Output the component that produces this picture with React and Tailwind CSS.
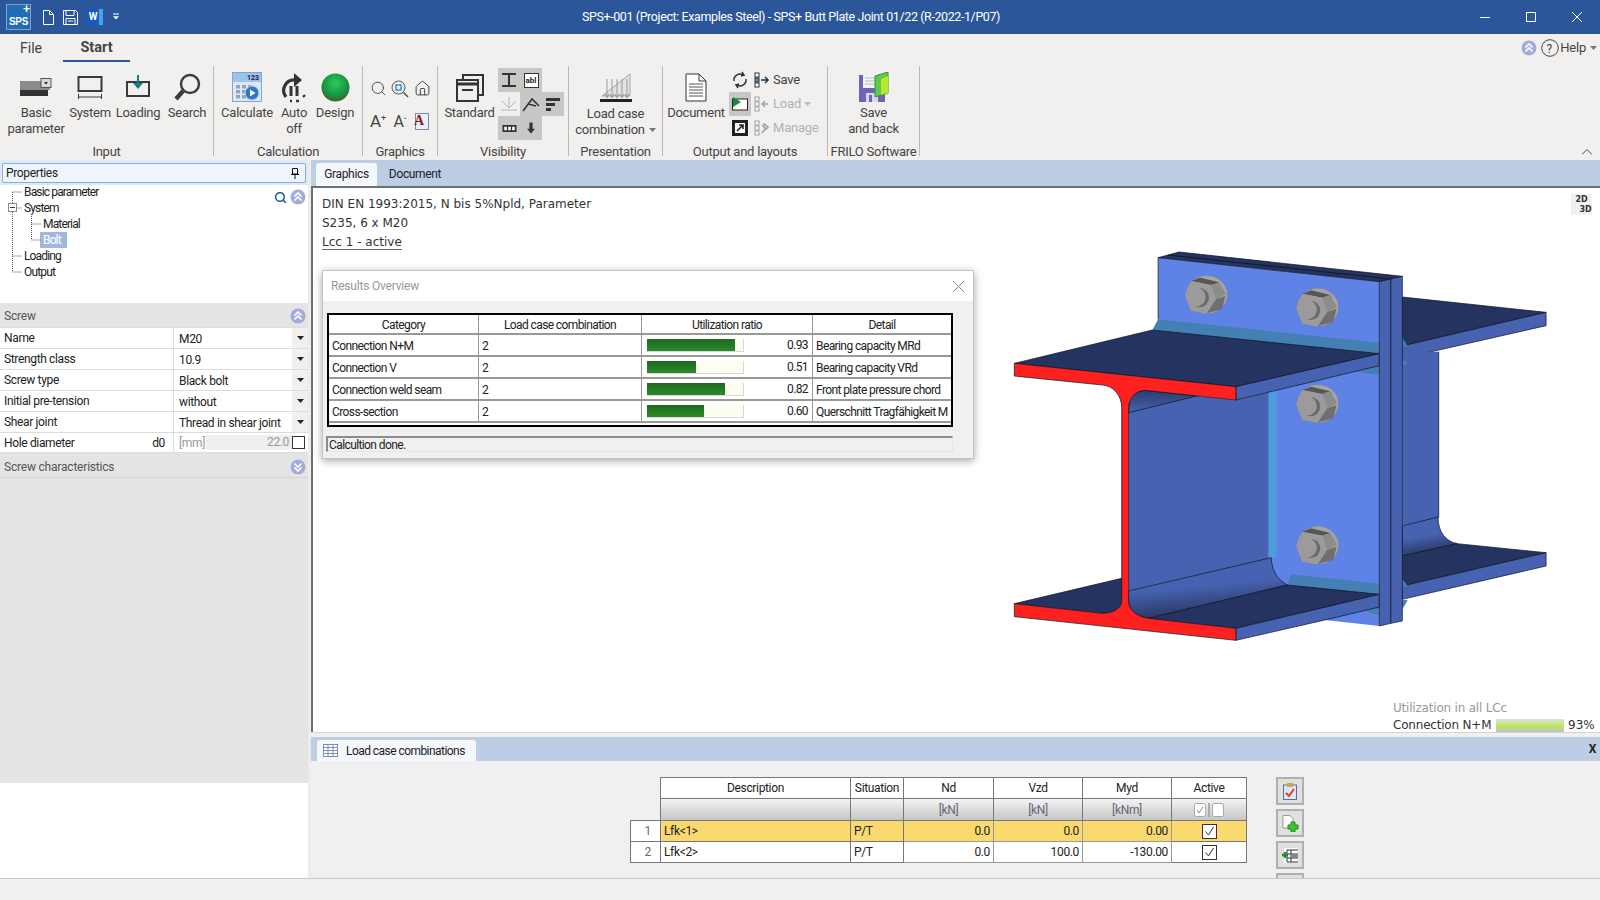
import { Search, House } from "lucide-react";

/* ── small shared bits ─────────────────────────────────── */
const Sep = () => <div className="w-px h-[90px] mt-[4px] bg-[#b9b9b9] shrink-0" />;

const Group = ({ w, label, children }) => (
  <div className={`${w} shrink-0 flex flex-col justify-between pt-[6px]`}>
    <div className="flex h-[76px]">{children}</div>
    <div className="h-[16px] leading-[16px] text-center text-[13px] tracking-[-0.25px] text-[#444] whitespace-nowrap">{label}</div>
  </div>
);

const Btn = ({ w, icon, lines }) => (
  <div className={`${w} shrink-0 flex flex-col items-center`}>
    <div className="h-[35px] mt-[2px] flex items-center justify-center">{icon}</div>
    {lines.map((l) => (
      <div key={l} className="leading-[16px] text-[13px] tracking-[-0.25px] text-[#444] whitespace-nowrap">{l}</div>
    ))}
  </div>
);

const Chevrons = ({ down }) => (
  <svg width="16" height="16" viewBox="0 0 16 16" className="shrink-0">
    <circle cx="8" cy="8" r="7.5" fill="#a3abdc" />
    <g fill="none" stroke="#fff" strokeWidth="1.6" transform={down ? "rotate(180 8 8)" : undefined}>
      <path d="M4.5 7.5 8 4l3.5 3.5M4.5 11.5 8 8l3.5 3.5" />
    </g>
  </svg>
);

const Caret = ({ color = "#222" }) => (
  <svg width="7" height="4" viewBox="0 0 7 4"><path d="M0 0h7L3.5 4z" fill={color} /></svg>
);

/* ── ribbon icons ──────────────────────────────────────── */
const IconBasic = () => (
  <svg width="32" height="20" viewBox="0 0 32 20">
    <rect x="0" y="3" width="30" height="9" fill="#8a8a8a" />
    <rect x="0" y="12" width="28" height="6" fill="#333" />
    <rect x="21" y="0.5" width="10" height="9" fill="#d8d8d8" stroke="#555" />
    <path d="M24 4h4l-2 2.5z" fill="#222" />
  </svg>
);
const IconSystem = () => (
  <svg width="26" height="24" viewBox="0 0 26 24" fill="none" stroke="#3a3a3a">
    <rect x="1.5" y="1" width="23" height="14" strokeWidth="2" />
    <path d="M1 21h24M1.5 18v5M24.5 18v5" />
  </svg>
);
const IconLoading = () => (
  <svg width="26" height="26" viewBox="0 0 26 26">
    <rect x="2" y="7" width="22" height="14" fill="none" stroke="#3a3a3a" strokeWidth="2" />
    <path d="M12 0h2v8h4l-5 6-5-6h4z" fill="#0f7f7f" />
  </svg>
);
const IconSearchBig = () => (
  <svg width="28" height="30" viewBox="0 0 28 30" fill="none" stroke="#3c3c3c">
    <circle cx="17" cy="11" r="9" strokeWidth="2.4" />
    <path d="M10 18 3 26" strokeWidth="4.4" />
  </svg>
);
const IconCalc = () => (
  <svg width="30" height="31" viewBox="0 0 30 31">
    <rect x="0.5" y="0.5" width="29" height="29" fill="#dbe8f6" stroke="#7ba7d9" />
    <rect x="1" y="1" width="28" height="9" fill="#9cc3ec" />
    <text x="15" y="8" fontSize="7" fontWeight="bold" fill="#224">123</text>
    {[4, 10, 16].map((x) =>
      [13, 18, 23].map((y) => <rect key={x + "-" + y} x={x} y={y} width="4" height="3.4" fill="#98a4b3" />)
    )}
    <circle cx="20" cy="21" r="7" fill="#2f78c4" stroke="#bcd7f2" />
    <path d="M18 17.5v7l5.5-3.5z" fill="#fff" />
  </svg>
);
const IconAuto = () => (
  <svg width="26" height="30" viewBox="0 0 26 30" fill="none">
    <path d="M14 7A10.5 10.5 0 0 0 5 24" stroke="#333" strokeWidth="3.2" />
    <path d="M13 0l8 7-8 7z" fill="#333" />
    <path d="M10 13v10M16 13v10" stroke="#333" strokeWidth="3" />
    <path d="M9 28h2M15 28h3M22 24l2-2" stroke="#333" strokeWidth="2.4" />
  </svg>
);
const IconSphere = () => (
  <svg width="29" height="29" viewBox="0 0 29 29">
    <defs>
      <radialGradient id="sph" cx="50%" cy="35%" r="65%">
        <stop offset="0" stopColor="#2fc85c" />
        <stop offset="0.65" stopColor="#119a41" />
        <stop offset="1" stopColor="#4d5a33" />
      </radialGradient>
    </defs>
    <circle cx="14.5" cy="14.5" r="14" fill="url(#sph)" />
  </svg>
);
const IconZoomFit = () => (
  <svg width="18" height="18" viewBox="0 0 18 18" fill="none" stroke="#555">
    <circle cx="7.5" cy="7.5" r="6.5" />
    <rect x="5" y="5" width="5" height="5" stroke="#2f8fd0" strokeWidth="1.4" />
    <path d="M12.5 12.5 17 17" strokeWidth="1.6" />
  </svg>
);
const IconDocA = () => (
  <div className="relative w-[14px] h-[17px] border border-[#7a8aa0] bg-[#eaf1fa]">
    <span className="absolute left-[-2px] top-[-1px] text-[14px] leading-[16px] font-bold text-[#8c1c1c] [font-family:'Liberation_Serif',serif]">A</span>
  </div>
);
const IconStandard = () => (
  <svg width="28" height="28" viewBox="0 0 28 28" fill="none" stroke="#333" strokeWidth="2">
    <path d="M7 6V1h20v20h-5" />
    <rect x="1" y="6" width="21" height="21" />
    <path d="M1 10h21" strokeWidth="3" />
    <path d="M6 16h11" />
  </svg>
);
const IconLoadCase = () => (
  <svg width="32" height="31" viewBox="0 0 32 31">
    <path d="M2 23 30 1v22z" fill="#e2e2e2" stroke="#a5a5a5" />
    {[7, 12, 17, 22, 27].map((x) => (
      <path key={x} d="M0 0v18M-2 15l2 4 2-4" transform={`translate(${x} 6)`} fill="none" stroke="#9a9a9a" />
    ))}
    <rect x="0" y="26" width="32" height="3" fill="#222" />
  </svg>
);
const IconDoc = () => (
  <svg width="22" height="29" viewBox="0 0 22 29" fill="none" stroke="#333">
    <path d="M1 1h13l7 7v20H1z" fill="#fff" />
    <path d="M14 1v7h7" />
    <path d="M4 11h14M4 14h14M4 17h14M4 20h14M4 23h14" stroke="#555" />
  </svg>
);
const IconFloppy = () => (
  <svg width="30" height="31" viewBox="0 0 30 31">
    <path d="M0 3h26v27H0z" fill="#6f63b8" />
    <rect x="4" y="3" width="17" height="13" fill="#f3f3f3" />
    <path d="M6 6h13M6 9h13M6 12h13" stroke="#b8b8b8" />
    <rect x="7" y="21" width="12" height="9" fill="#d8d8e8" />
    <rect x="10" y="23" width="3" height="7" fill="#6f63b8" />
    <path d="M16 4 29 0v21l-13 4z" fill="#5fc948" stroke="#2f9a30" />
    <path d="M22 7l7-3v17l-7 2z" fill="#b7e82c" />
  </svg>
);
const RowIco = ({ children, dim }) => (
  <svg width="16" height="16" viewBox="0 0 16 16" className={dim ? "opacity-40" : ""}>
    <rect x="1" y="1" width="4" height="4" fill="#fff" stroke="#333" />
    <rect x="1" y="6" width="4" height="4" fill={dim ? "#fff" : "#2f9fd6"} stroke="#333" />
    <rect x="1" y="11" width="4" height="4" fill="#fff" stroke="#333" />
    {children}
  </svg>
);

/* ── steel joint drawing, points are in a 1565x1290 sheet squeezed into 600x430 ── */
const Pg = ({ p, f, s = "#10131f" }) => (
  <polygon points={p} fill={f} stroke={s} strokeWidth="0.7" vectorEffect="non-scaling-stroke" />
);
const Pa = ({ d, f, s = "#10131f" }) => (
  <path d={d} fill={f} stroke={s} strokeWidth="0.7" vectorEffect="non-scaling-stroke" />
);
const Bolt = ({ x, y }) => (
  <g transform={`translate(${x} ${y}) scale(.87 1) translate(-110 -70)`}>
    <ellipse cx="112" cy="71" rx="62" ry="57" fill="#a5a5a5" stroke="#7d7d7d" />
    <polygon points="65,30 92,20 150,34 125,42" fill="#565656" />
    <polygon points="47,72 65,30 125,42 140,85 112,127 65,120" fill="#9c9a9a" />
    <polygon points="125,42 150,34 170,70 140,85" fill="#8c8c8c" />
    <polygon points="140,85 168,75 158,115 112,127" fill="#6f6f6f" />
    <circle cx="90" cy="80" r="29" fill="#6a6a6a" />
    <circle cx="80" cy="78" r="29" fill="#9c9a9a" />
  </g>
);
const Joint = () => (
  <svg width="600" height="430" viewBox="0 0 1565 1290" preserveAspectRatio="none" className="absolute left-[686px] top-[43px]">
    <defs>
      <linearGradient id="fil" x1="0" y1="0" x2="0.25" y2="1">
        <stop offset="0" stopColor="#4662b0" />
        <stop offset="0.55" stopColor="#4662b0" />
        <stop offset="1" stopColor="#28365f" />
      </linearGradient>
      <linearGradient id="fil2" x1="0" y1="1" x2="0" y2="0">
        <stop offset="0" stopColor="#4662b0" />
        <stop offset="1" stopColor="#2c3c6e" />
      </linearGradient>
    </defs>
    {/* back of the beam, right of the plate */}
    <Pg p="1052,198 1427,244 1052,345" f="#243360" />
    <Pg p="1427,244 1427,284 1052,382 1052,345" f="#4662b0" />
    <polygon points="1052,362 1147,362 1147,860 1052,885" fill="#4662b0" />
    <path d="M1147 362V860" stroke="#10131f" strokeWidth="0.7" vectorEffect="non-scaling-stroke" />
    <Pa d="M1052 885 1145 858C1146 905 1165 930 1195 938L1052 975Z" f="url(#fil)" />
    <Pg p="1052,975 1195,938 1427,965 1052,1065" f="#243360" />
    <Pg p="1427,965 1427,1005 1052,1105 1052,1065" f="#4662b0" />
    <polygon points="1052,320 1066,345 1052,348" fill="#4480b4" />
    <polygon points="1052,384 1066,396 1052,406" fill="#4480b4" />
    <polygon points="1052,1043 1066,1065 1052,1068" fill="#4480b4" />
    <polygon points="1052,1106 1066,1108 1052,1135" fill="#4480b4" />
    {/* end plate */}
    <polygon points="415,80 992,152 992,1185 850,1167 700,1100 700,480 415,300" fill="#5e82e6" />
    <path d="M415 80V265" stroke="#10131f" strokeWidth="0.7" vectorEffect="non-scaling-stroke" />
    <Pg p="415,80 470,63 1052,136 992,152" f="#243360" />
    <path d="M440 72 1022 144" stroke="#10131f" strokeWidth="0.8" vectorEffect="non-scaling-stroke" />
    <polygon points="415,265 992,335 992,370 400,297" fill="#4480b4" />
    <polygon points="930,422 992,404 992,432" fill="#4480b4" />
    <polygon points="762,1030 992,1058 992,1092 752,1062" fill="#4480b4" />
    <polygon points="940,1135 992,1128 992,1153" fill="#4480b4" />
    {[[540, 190], [830, 228], [830, 517], [830, 942]].map(([x, y]) => <Bolt key={y} x={x} y={y} />)}
    {/* web and fillets of the front beam */}
    <polygon points="338,520 380,478 618,507 703,483 703,985 338,1080" fill="#4662b0" />
    <Pa d="M338 545 515 495 380 478C355 480 338 500 338 545Z" f="url(#fil2)" />
    <polygon points="703,483 724,477 724,982 703,982" fill="#4d9cdc" />
    <Pa d="M338 1080 710 980C712 1020 725 1045 752 1062L390 1162C355 1155 338 1135 338 1110Z" f="url(#fil)" />
    {/* flanges */}
    <Pg p="40,397 400,297 992,368 618,467" f="#243360" />
    <Pg p="618,467 992,368 992,404 618,507" f="#4662b0" />
    <Pa d="M40 1118 320 1042V1110C320 1130 300 1147 270 1147Z" f="#243360" />
    <Pg p="390,1162 752,1062 992,1090 618,1192" f="#243360" />
    <Pg p="618,1192 992,1090 992,1128 850,1167 618,1228" f="#4662b0" />
    {/* cut section */}
    <Pa
      d="M40 397 618 467V507L380 478C355 480 338 500 338 530V1110C338 1135 355 1155 390 1162L618 1192V1228L40 1157V1118L270 1147C300 1147 320 1130 320 1110V530C320 495 300 465 270 462L40 435Z"
      f="#ff2020"
    />
    {/* plate edge */}
    <Pg p="992,152 1022,144 1022,1177 992,1185" f="#4662b0" />
    <Pg p="1022,144 1052,136 1052,1170 1022,1177" f="#4662b0" />
  </svg>
);

/* ── data ──────────────────────────────────────────────── */
const props = [
  ["Name", "M20"],
  ["Strength class", "10.9"],
  ["Screw type", "Black bolt"],
  ["Initial pre-tension", "without"],
  ["Shear joint", "Thread in shear joint"],
];
const results = [
  ["Connection N+M", 92, "0.93", "Bearing capacity MRd"],
  ["Connection V", 51, "0.51", "Bearing capacity VRd"],
  ["Connection weld seam", 81, "0.82", "Front plate pressure chord"],
  ["Cross-section", 59, "0.60", "Querschnitt Tragfähigkeit M"],
];
const lcc = [
  ["1", "Lfk<1>", "P/T", "0.0", "0.0", "0.00"],
  ["2", "Lfk<2>", "P/T", "0.0", "100.0", "-130.00"],
];

const Check = () => (
  <svg width="15" height="15" viewBox="0 0 15 15" className="inline-block align-middle">
    <rect x="0.5" y="0.5" width="14" height="14" fill="#fff" stroke="#333" />
    <path d="M3.5 7.5 6.5 11l5-8" fill="none" stroke="#333" />
  </svg>
);

const Cell = ({ cls, children }) => <div className={`h-[24px] w-[22px] flex items-center justify-center ${cls || ""}`}>{children}</div>;

export default function App() {
  return (
    <div className="w-[1600px] h-[900px] overflow-hidden flex flex-col bg-[#f1f0ef] text-[#222] [font-family:Roboto,sans-serif]">
      {/* title bar */}
      <div className="h-[34px] shrink-0 bg-[#2b579a] flex items-center text-white">
        <div className="w-[150px] flex items-center pl-[6px] gap-[9px]">
          <div className="w-[25px] h-[26px] bg-[#1f6eb5] border border-[#8aa0bd] flex flex-col font-bold [font-family:'Liberation_Sans',sans-serif]">
            <div className="h-[10px] leading-[9px] text-[12px] text-right">+</div>
            <div className="h-[13px] leading-[13px] text-[10px] text-center tracking-[-0.3px]">SPS</div>
          </div>
          <svg width="11" height="15" viewBox="0 0 11 15" fill="none" stroke="#fff" className="ml-[3px]"><path d="M.5.5h6l4 4v10H.5z" /><path d="M6.500.5v4h4" /></svg>
          <svg width="15" height="15" viewBox="0 0 15 15" fill="none" stroke="#fff"><path d="M.5.5h12l2 2v12H.5z" /><path d="M3 .5v5h8v-5M3 8.5h9v6M3 8.5v6M5 11h5" /></svg>
          <div className="w-[16px] h-[16px] bg-[#185abd] text-[10px] font-bold text-center leading-[16px] border-r-4 border-[#41a5ee]">W</div>
          <svg width="6" height="8" viewBox="0 0 7 8" className="ml-[1px]"><path d="M0 0h7v1H0zM0 3h7L3.5 7z" fill="#fff" /></svg>
        </div>
        <div className="flex-1 text-center text-[12.5px] tracking-[-0.4px]">SPS+-001 (Project: Examples Steel) - SPS+ Butt Plate Joint 01/22 (R-2022-1/P07)</div>
        <div className="w-[168px] flex items-center justify-end pr-[18px] gap-[36px]">
          <div className="w-[10px] h-px bg-white" />
          <div className="w-[10px] h-[10px] border border-white" />
          <svg width="10" height="10" viewBox="0 0 10 10" stroke="#fff"><path d="M0 0l10 10M10 0 0 10" /></svg>
        </div>
      </div>

      {/* ribbon */}
      <div className="h-[126px] shrink-0 flex flex-col">
        <div className="h-[28px] shrink-0 flex items-center relative">
          <div className="w-[63px] pl-[20px] text-[14px] text-[#444]">File</div>
          <div className="w-[67px] h-full flex items-center justify-center pt-[1px] text-[14.5px] font-bold text-[#444] border-b-2 border-[#2b579a]">Start</div>
          <div className="ml-auto pr-[3px] flex items-center gap-[4px] text-[13px] tracking-[-0.2px] text-[#444]">
            <Chevrons />
            <svg width="18" height="18" viewBox="0 0 18 18" fill="none"><circle cx="9" cy="9" r="8.3" stroke="#444" /><text x="5.500" y="13.500" fontSize="12" fill="#444">?</text></svg>
            <span className="-ml-[3px]">Help</span>
            <Caret color="#777" />
          </div>
        </div>
        <div className="h-[98px] flex relative">
          <Group w="w-[213px]" label="Input">
            <div className="w-[8px]" />
            <Btn w="w-[56px]" icon={<IconBasic />} lines={["Basic", "parameter"]} />
            <div className="w-[3px]" />
            <Btn w="w-[46px]" icon={<IconSystem />} lines={["System"]} />
            <Btn w="w-[50px]" icon={<IconLoading />} lines={["Loading"]} />
            <Btn w="w-[48px]" icon={<IconSearchBig />} lines={["Search"]} />
          </Group>
          <Sep />
          <Group w="w-[148px]" label="Calculation">
            <Btn w="w-[66px]" icon={<IconCalc />} lines={["Calculate"]} />
            <Btn w="w-[28px]" icon={<IconAuto />} lines={["Auto", "off"]} />
            <Btn w="w-[54px]" icon={<IconSphere />} lines={["Design"]} />
          </Group>
          <Sep />
          <Group w="w-[74px]" label="Graphics">
            <div className="ml-[4px] mt-[4px] grid grid-cols-[22px_22px_22px] auto-rows-[33px] place-items-center text-[#444]">
              <Search size={17} strokeWidth={1.3} />
              <IconZoomFit />
              <House size={17} strokeWidth={1.4} />
              <span className="text-[17px] leading-none">A<sup className="text-[9px] -top-[6px] relative align-baseline">+</sup></span>
              <span className="text-[16px] leading-none">A<sup className="text-[9px] -top-[6px] relative align-baseline">-</sup></span>
              <IconDocA />
            </div>
          </Group>
          <Sep />
          <Group w="w-[130px]" label="Visibility">
            <div className="w-[3px]" />
            <Btn w="w-[57px]" icon={<IconStandard />} lines={["Standard"]} />
            <div className="flex flex-col">
              <div className="flex bg-[#c8c7c6] w-[44px]">
                <Cell><svg width="16" height="16" viewBox="0 0 16 16" stroke="#333" strokeWidth="2"><path d="M1 2h14M1 14h14M8 2v12" /></svg></Cell>
                <Cell><div className="w-[15px] h-[15px] border border-[#333] bg-white text-[8px] leading-[13px] text-center font-bold">abl</div></Cell>
              </div>
              <div className="flex">
                <Cell><svg width="16" height="16" viewBox="0 0 16 16" fill="none" stroke="#b4b4b4"><path d="M0 14h16M8 1v11M1 5l7 7 7-7" /></svg></Cell>
                <div className="flex bg-[#c8c7c6]">
                  <Cell><svg width="18" height="16" viewBox="0 0 18 16" fill="none" stroke="#333" strokeWidth="1.6"><path d="M1 15 10 3l7 7M6 8l8 2" /></svg></Cell>
                  <Cell><svg width="14" height="14" viewBox="0 0 14 14" fill="#333"><path d="M0 1h14v3H0zM0 6h9v3H0zM0 11h5v3H0z" /></svg></Cell>
                </div>
              </div>
              <div className="flex bg-[#c8c7c6] w-[44px]">
                <Cell><svg width="15" height="7" viewBox="0 0 16 8"><rect width="16" height="8" fill="#333" /><path d="M2 2h3v4H2zM6.500 2h3v4h-3zM11 2h3v4h-3z" fill="#fff" /></svg></Cell>
                <Cell><svg width="8" height="12" viewBox="0 0 10 14" fill="#333"><path d="M3 0h4v8h3l-5 6-5-6h3z" /></svg></Cell>
              </div>
            </div>
          </Group>
          <Sep />
          <Group w="w-[93px]" label="Presentation">
            <div className="w-full pt-[1px]">
              <Btn w="w-full" icon={<IconLoadCase />} lines={["Load case"]} />
              <div className="flex items-center justify-center gap-[4px] leading-[16px] text-[13px] tracking-[-0.25px] text-[#444]">combination <Caret color="#777" /></div>
            </div>
          </Group>
          <Sep />
          <Group w="w-[164px]" label="Output and layouts">
            <Btn w="w-[66px]" icon={<IconDoc />} lines={["Document"]} />
            <div className="flex flex-col">
              <Cell><svg width="16" height="18" viewBox="0 0 16 18" fill="none" stroke="#333" strokeWidth="1.5"><path d="M2 10a6 6 0 0 1 9-6M14 8a6 6 0 0 1-9 6" /><path d="M10 1l2 3-3 1M6 17l-2-3 3-1" /></svg></Cell>
              <Cell cls="bg-[#c8c7c6]"><svg width="16" height="14" viewBox="0 0 16 14"><rect x="0.500" y="2" width="15" height="11" fill="#fff" stroke="#222" /><path d="M1 0l8 5-8 5z" fill="#16893a" /></svg></Cell>
              <Cell><svg width="16" height="16" viewBox="0 0 16 16"><rect width="16" height="16" fill="#222" /><rect x="3" y="3" width="10" height="10" fill="#fff" /><path d="M5 11l6-6M7 5h4v4" stroke="#222" strokeWidth="1.6" fill="none" /></svg></Cell>
            </div>
            <div className="flex flex-col ml-[3px] text-[13px] tracking-[-0.2px]">
              <div className="h-[24px] flex items-center gap-[3px] text-[#444]"><RowIco><path d="M7 8h6M11 5l3 3-3 3" stroke="#333" strokeWidth="1.5" fill="none" /></RowIco>Save</div>
              <div className="h-[24px] flex items-center gap-[3px] text-[#b2b2b2]"><RowIco dim><path d="M14 8H8M11 5 8 8l3 3" stroke="#333" strokeWidth="1.5" fill="none" /></RowIco>Load <Caret color="#bbb" /></div>
              <div className="h-[24px] flex items-center gap-[3px] text-[#b2b2b2]"><RowIco dim><path d="M8 13l4-5M10 4l4 3-2 2-3-3z" stroke="#333" strokeWidth="1.6" fill="none" /></RowIco>Manage</div>
            </div>
          </Group>
          <Sep />
          <Group w="w-[91px]" label="FRILO Software">
            <Btn w="w-full" icon={<IconFloppy />} lines={["Save", "and back"]} />
          </Group>
          <Sep />
          <svg width="10" height="6" viewBox="0 0 10 6" fill="none" stroke="#444" className="absolute right-[8px] bottom-[5px]"><path d="M0 5.500 5 .5l5 5" /></svg>
        </div>
      </div>

      {/* main */}
      <div className="h-[718px] shrink-0 flex text-[12px] tracking-[-0.35px]">
        {/* properties panel */}
        <div className="w-[308px] shrink-0 flex flex-col bg-white">
          <div className="h-[25px] bg-[#dfe8f3] pt-[3px] px-[2px] shrink-0">
            <div className="h-[20px] border border-[#84aee0] rounded-[2px] bg-[#eef5fd] flex items-center justify-between pl-[3px] pr-[6px]">
              <span>Properties</span>
              <svg width="8" height="11" viewBox="0 0 8 11" fill="none" stroke="#111"><path d="M1.500.5h5v5.500h-5zM0 6.500h8M4 7v4" /></svg>
            </div>
          </div>
          <div className="h-[118px] shrink-0 relative">
            {/* tree connectors */}
            <svg width="50" height="100" viewBox="0 0 50 100" className="absolute left-0 top-0" fill="none" stroke="#555" strokeDasharray="1 1">
              <path d="M12.500 7V87M12.500 7H22M12.500 23H22M12.500 71H22M12.500 87H22M31.500 29V55M31.500 39H41M31.500 55H41" />
            </svg>
            <div className="absolute left-[8px] top-[18px] w-[9px] h-[9px] bg-white border border-[#888] flex items-center justify-center"><div className="w-[5px] h-px bg-[#333]" /></div>
            <div className="absolute right-[2px] top-[4px] flex items-center gap-[3px]">
              <Search size={13} strokeWidth={3} className="text-[#1d5fa8]" />
              <Chevrons />
            </div>
            <div className="pl-[24px] tracking-[-0.85px] -mt-[1px]">
              <div className="h-[16px] leading-[16px]">Basic parameter</div>
              <div className="h-[16px] leading-[16px]">System</div>
              <div className="h-[16px] leading-[16px] pl-[19px]">Material</div>
              <div className="h-[16px] leading-[16px] ml-[16px] w-[27px] pl-[3px] bg-[#a2b7dd] text-white">Bolt</div>
              <div className="h-[16px] leading-[16px]">Loading</div>
              <div className="h-[16px] leading-[16px]">Output</div>
            </div>
          </div>
          <div className="h-[480px] shrink-0 bg-[#e4e4e4] flex flex-col">
            <div className="h-[24px] shrink-0 flex items-center justify-between pt-[1px] pl-[4px] pr-[2px] text-[12px] text-[#555] tracking-[-0.2px]">
              <span>Screw</span>
              <Chevrons />
            </div>
            {props.map(([k, v]) => (
              <div key={k} className="h-[21px] shrink-0 flex bg-white border-t border-[#dcdcdc]">
                <div className="w-[174px] pl-[4px] leading-[20px] border-r border-[#dcdcdc]">{k}</div>
                <div className="flex-1 pl-[5px] leading-[20px] pt-[1px]">{v}</div>
                <div className="w-[16px] bg-[#f0f0f0] flex items-center justify-center"><Caret /></div>
              </div>
            ))}
            <div className="h-[21px] shrink-0 flex bg-white border-y border-[#dcdcdc]">
              <div className="w-[174px] px-[4px] leading-[20px] border-r border-[#dcdcdc] flex justify-between pr-[8px]"><span>Hole diameter</span><span>d0</span></div>
              <div className="w-[31px] pl-[5px] leading-[20px] text-[#999]">[mm]</div>
              <div className="w-[86px] ml-[1px] my-[2px] bg-[#eeeeee] text-[#999] text-right leading-[15px] pr-[3px]">22.0</div>
              <div className="w-[13px] h-[13px] mt-[3px] border border-[#333] bg-white" />
            </div>
            <div className="h-[25px] shrink-0 flex items-center justify-between pt-[3px] pl-[4px] pr-[2px] text-[12px] text-[#555] tracking-[-0.2px] border-b border-[#d4d4d4]">
              <span>Screw characteristics</span>
              <Chevrons down />
            </div>
          </div>
        </div>
        <div className="w-[3px] shrink-0 bg-[#ececec]" />

        {/* right side */}
        <div className="flex-1 min-w-0 flex flex-col">
          <div className="h-[26px] shrink-0 bg-[#bccde4] flex items-end pl-[5px] text-[12px]">
            <div className="w-[61px] h-[23px] bg-[#f4f8fd] rounded-t-[3px] text-center leading-[22px]">Graphics</div>
            <div className="w-[76px] h-[23px] text-center leading-[22px]">Document</div>
          </div>

          <div className="h-[546px] shrink-0 relative bg-white border-l-2 border-t-2 border-[#6f6f6f] border-b-0 [font-family:'DejaVu_Sans',sans-serif] tracking-normal text-[#333]">
            <div className="pt-[7px] pl-[9px] leading-[19px] text-[12px]">
              <div>DIN EN 1993:2015, N bis 5%Npld, Parameter</div>
              <div>S235, 6 x M20</div>
              <div><span className="border-b border-[#666]">Lcc 1 - active</span></div>
            </div>
            <div className="absolute right-[8px] top-[6px] w-[21px] h-[21px] bg-[#f0f0f0] text-[8px] font-bold leading-[10px] pt-[1px] text-center">2D<br /><span className="pl-[8px]">3D</span></div>
            <Joint />

            {/* floating results window */}
            <div className="absolute left-[9px] top-[82px] w-[652px] h-[189px] bg-[#f0f0f0] border border-[#c4c4c4] shadow-[0_2px_8px_rgba(0,0,0,0.35)] tracking-[-0.6px] text-[#222] [font-family:Roboto,sans-serif]">
              <div className="h-[30px] bg-white flex items-center justify-between pl-[8px] pr-[9px] text-[#999] tracking-[-0.2px]">
                <span>Results Overview</span>
                <svg width="11" height="11" viewBox="0 0 11 11" stroke="#888"><path d="M0 0l11 11M11 0 0 11" /></svg>
              </div>
              <div className="ml-[4px] mt-[12px] w-[626px] h-[114px] border-2 border-black bg-white">
                <div className="flex h-[20px] leading-[20px] text-center border-b-2 border-[#999]">
                  <div className="w-[150px] border-r border-[#999]">Category</div>
                  <div className="w-[163px] border-r border-[#999]">Load case combination</div>
                  <div className="w-[171px] border-r border-[#999]">Utilization ratio</div>
                  <div className="flex-1">Detail</div>
                </div>
                {results.map(([c, pct, v, d]) => (
                  <div key={c} className="flex h-[22px] leading-[22px] border-b-2 border-[#999]">
                    <div className="w-[150px] pl-[3px] border-r border-[#999]">{c}</div>
                    <div className="w-[163px] pl-[3px] border-r border-[#999]">2</div>
                    <div className="w-[171px] pl-[5px] pr-[4px] border-r border-[#999] flex items-center justify-between">
                      <div className="w-[97px] h-[13px] bg-[#fdfdf0] border-r border-b border-[#d8d8d8]">
                        <div className="h-full bg-gradient-to-b from-[#1f6a1f] to-[#2b8a2b]" style={{ width: `${pct}%` }} />
                      </div>
                      <span>{v}</span>
                    </div>
                    <div className="flex-1 pl-[3px] whitespace-nowrap">{d}</div>
                  </div>
                ))}
              </div>
              <div className="ml-[3px] mt-[9px] w-[627px] h-[16px] border-t-2 border-l-2 border-[#8c8c8c] border-r border-b border-r-[#e6e6e6] border-b-[#e6e6e6] leading-[15px] pl-[1px]">Calcultion done.</div>
            </div>

            {/* utilization readout */}
            <div className="absolute right-[6px] bottom-[-2px] w-[201px] text-[12px] leading-[17px]">
              <div className="text-[#999] tracking-[-0.2px]">Utilization in all LCc</div>
              <div className="flex items-center">
                <span className="tracking-[-0.2px]">Connection N+M</span>
                <div className="ml-auto w-[68px] h-[13px] bg-gradient-to-b from-[#e0e0e0] via-[#bdea4f] to-[#c0c0c0]" />
                <span className="ml-[4px] w-[26px]">93%</span>
              </div>
            </div>
          </div>

          <div className="h-[5px] shrink-0 border-t border-[#d4d4d4] bg-[#f0f0f0]" />
          <div className="h-[24px] shrink-0 bg-[#bccde4] flex items-end justify-between pl-[6px] pr-[4px]">
            <div className="w-[159px] h-[21px] bg-[#f4f8fd] rounded-t-[3px] flex items-center gap-[8px] pl-[6px] tracking-[-0.55px] whitespace-nowrap">
              <svg width="15" height="13" viewBox="0 0 15 13" fill="#fff" stroke="#7b8fc0" className="shrink-0"><rect x=".5" y=".5" width="14" height="12" /><path d="M0 3.500h15M0 6.500h15M0 9.500h15M5 0v13M10 0v13" /></svg>
              <span>Load case combinations</span>
            </div>
            <span className="self-center text-[12px] font-bold leading-none">X</span>
          </div>

          <div className="h-[117px] shrink-0 overflow-hidden bg-[#f0f0f0] flex items-start pt-[16px] pl-[319px]">
            <table className="table-fixed border-collapse w-[616px] text-[12px] shrink-0">
              <colgroup>
                <col className="w-[30px]" /><col className="w-[190px]" /><col className="w-[53px]" /><col className="w-[90px]" /><col className="w-[89px]" /><col className="w-[89px]" /><col className="w-[75px]" />
              </colgroup>
              <thead>
                <tr className="h-[21px] bg-white text-center">
                  <th className="border-0 bg-[#f0f0f0]" />
                  {["Description", "Situation", "Nd", "Vzd", "Myd", "Active"].map((h) => (
                    <th key={h} className="font-normal p-0 border border-[#777]">{h}</th>
                  ))}
                </tr>
                <tr className="h-[22px] text-center text-[#667] bg-gradient-to-b from-[#f4f4f4] to-[#c4c4c4]">
                  <th className="border-0 bg-[#f0f0f0]" />
                  <th className="border border-[#777]" />
                  <th className="border border-[#777]" />
                  {["[kN]", "[kN]", "[kNm]"].map((u, i) => <th key={i} className="font-normal p-0 border border-[#777]">{u}</th>)}
                  <th className="border border-[#777]">
                    <div className="flex justify-center items-center gap-[2px]">
                      <svg width="12" height="14" viewBox="0 0 12 14"><rect x=".5" y=".5" width="11" height="13" rx="2" fill="#fff" stroke="#aaa" /><path d="M3 7l2 3 4-6" fill="none" stroke="#888" /></svg>
                      <div className="w-[2px] h-[14px] bg-[#aaa]" />
                      <div className="w-[12px] h-[14px] bg-white border border-[#aaa] rounded-[2px]" />
                    </div>
                  </th>
                </tr>
              </thead>
              <tbody>
                {lcc.map(([n, d, s, a, b, c], i) => (
                  <tr key={n} className={`h-[21px] ${i === 0 ? "bg-[#fad96f]" : "bg-white"}`}>
                    <td className="p-0 pr-[9px] text-right text-[#667] bg-white border border-[#777]">{n}</td>
                    <td className="p-0 pl-[3px] border border-[#777]">{d}</td>
                    <td className="p-0 pl-[3px] border border-[#777]">{s}</td>
                    <td className="p-0 pr-[3px] text-right border border-[#999]">{a}</td>
                    <td className="p-0 pr-[3px] text-right border border-[#999]">{b}</td>
                    <td className="p-0 pr-[3px] text-right border border-[#999]">{c}</td>
                    <td className="p-0 text-center border border-[#777]"><Check /></td>
                  </tr>
                ))}
              </tbody>
            </table>
            <div className="ml-[29px] flex flex-col gap-[4px] shrink-0">
              <div className="w-[28px] h-[28px] bg-[#e0e0e0] border-2 border-[#b0b0b0] flex items-center justify-center">
                <svg width="14" height="17" viewBox="0 0 14 17"><rect x=".5" y="2" width="13" height="14.500" fill="#dce6f4" stroke="#5a6f96" /><rect x="4" y="0" width="6" height="4" fill="#d4a24a" /><path d="M3 10l3 3 5-7" fill="none" stroke="#e0412a" strokeWidth="2" /></svg>
              </div>
              <div className="w-[28px] h-[28px] bg-[#e0e0e0] border-2 border-[#b0b0b0] flex items-center justify-center">
                <svg width="17" height="17" viewBox="0 0 17 17"><path d="M1 .5h7l3 3V13H1z" fill="#fff" stroke="#999" /><path d="M9 7h4v3h3v4h-3v3H9v-3H6v-4h3z" fill="#3fc22e" stroke="#1a8a1a" /></svg>
              </div>
              <div className="w-[28px] h-[28px] bg-[#e0e0e0] border-2 border-[#b0b0b0] flex items-center justify-center">
                <svg width="17" height="17" viewBox="0 0 17 17"><rect x="2" y="1" width="14" height="15" fill="#fff" /><path d="M5 3h11M5 7h11M5 11h11M5 15h11M5 3v12M9 3v12" stroke="#333" fill="none" /><rect x="9" y="7" width="7" height="4" fill="#888" /><path d="M0 8h6M3 5v6" stroke="#1f8f2f" strokeWidth="2.4" /></svg>
              </div>
              <div className="w-[28px] h-[28px] bg-[#e0e0e0] border-2 border-[#b0b0b0]" />
            </div>
          </div>
        </div>
      </div>

      {/* status bar */}
      <div className="flex-1 border-t border-[#c8c8c8] bg-[#f1f0ef]" />
    </div>
  );
}
